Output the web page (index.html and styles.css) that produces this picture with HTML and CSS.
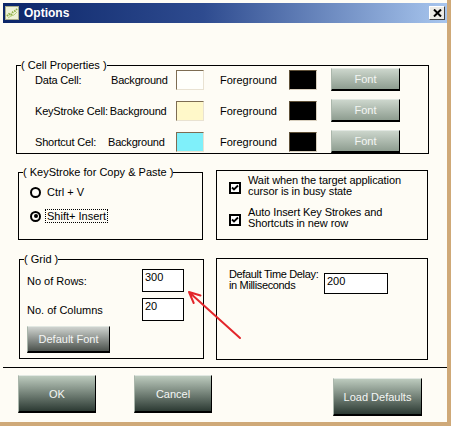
FILE: index.html
```html
<!DOCTYPE html>
<html lang="en">
<head>
<meta charset="UTF-8" />
<title>Options</title>
<link rel="stylesheet" href="styles.css">
</head>
<body>

<div class="window">
  <div class="titlebar">
    <svg class="app-icon" width="14" height="14" viewBox="0 0 14 14">
      <rect x="0.5" y="0.5" width="13" height="13" fill="#eef2d8" stroke="#a9ad8a"/>
      <path d="M2 10 L4 8 L6 9 L8 6 L10 5 L12 3" stroke="#8fb04a" stroke-width="2" fill="none" stroke-dasharray="1.5 1"/>
      <path d="M3 12 L6 10 L9 9 L12 6" stroke="#b7cf7a" stroke-width="1" fill="none"/>
    </svg>
    <span class="title">Options</span>
    <span class="close">
      <svg width="9" height="8" viewBox="0 0 9 8">
        <path d="M1 0.5 L8 7.5 M8 0.5 L1 7.5" stroke="#000" stroke-width="2"/>
      </svg>
    </span>
  </div>

  <div class="content">
    <fieldset class="group cells">
      <legend>( Cell Properties )</legend>
      <div class="cell-rows">
        <div class="cell-row">
          <div class="cell-label"><span class="name w-data">Data Cell:</span><span>Background</span></div>
          <span class="swatch sw-white"></span>
          <span class="fg-label">Foreground</span>
          <span class="swatch sw-black"></span>
          <button class="btn btn-font">Font</button>
        </div>
        <div class="cell-row">
          <div class="cell-label"><span class="name w-key">KeyStroke Cell:</span><span>Background</span></div>
          <span class="swatch sw-yellow"></span>
          <span class="fg-label">Foreground</span>
          <span class="swatch sw-black"></span>
          <button class="btn btn-font">Font</button>
        </div>
        <div class="cell-row">
          <div class="cell-label"><span class="name w-short">Shortcut Cel:</span><span>Background</span></div>
          <span class="swatch sw-cyan"></span>
          <span class="fg-label">Foreground</span>
          <span class="swatch sw-black"></span>
          <button class="btn btn-font">Font</button>
        </div>
      </div>
    </fieldset>

    <div class="pair pair-mid">
      <fieldset class="group keys">
        <legend>( KeyStroke for Copy &amp; Paste )</legend>
        <div class="radio-row"><span class="radio"></span><span>Ctrl + V</span></div>
        <div class="radio-row"><span class="radio on"></span><span class="focus">Shift+ Insert</span></div>
      </fieldset>
      <div class="box checks">
        <div class="check-row">
          <svg class="check" width="12" height="12" viewBox="0 0 12 12">
            <rect x="1" y="1" width="10" height="10" fill="#fff" stroke="#000" stroke-width="2"/>
            <path d="M3 5.5 L5 7.5 L9 3.5" stroke="#000" stroke-width="1.8" fill="none"/>
          </svg>
          <span class="check-text">Wait when the target application<br>cursor is in busy state</span>
        </div>
        <div class="check-row">
          <svg class="check" width="12" height="12" viewBox="0 0 12 12">
            <rect x="1" y="1" width="10" height="10" fill="#fff" stroke="#000" stroke-width="2"/>
            <path d="M3 5.5 L5 7.5 L9 3.5" stroke="#000" stroke-width="1.8" fill="none"/>
          </svg>
          <span class="check-text">Auto Insert Key Strokes and<br>Shortcuts in new row</span>
        </div>
      </div>
    </div>

    <div class="pair pair-low">
      <fieldset class="group grid">
        <legend>( Grid )</legend>
        <div class="field-row"><span class="field-label">No of Rows:</span><span class="input">300</span></div>
        <div class="field-row"><span class="field-label">No. of Columns</span><span class="input">20</span></div>
        <button class="btn btn-default">Default Font</button>
      </fieldset>
      <div class="box delay">
        <span class="delay-text">Default Time Delay:<br>in Milliseconds</span>
        <span class="input input-wide">200</span>
      </div>
    </div>

    <div class="separator"></div>

    <div class="actions">
      <button class="btn btn-big">OK</button>
      <button class="btn btn-big btn-cancel">Cancel</button>
      <button class="btn btn-big btn-load">Load Defaults</button>
    </div>
  </div>

  <svg class="arrow" width="451" height="426" viewBox="0 0 451 426">
    <path d="M240 338 L190 293 M189 292 L200.5 295.5 M189 292 L193.7 303" stroke="#e3262b" stroke-width="2" fill="none" stroke-linecap="round"/>
  </svg>
</div>

</body>
</html>
```

FILE: styles.css
```css
html, body {
  margin: 0; padding: 0;
  font-family: "Liberation Sans", Arial, sans-serif; font-size: 11px;
  color: #000; background: #fff; white-space: nowrap;
}
.window {
  position: relative; width: 451px; height: 426px;
  box-sizing: border-box; padding: 3px 0 0 3px;
  background: #fefcf5;
  border-right: 4px solid #cfa978; border-bottom: 4px solid #cfa978;
}
.titlebar {
  height: 20px; display: flex; align-items: center;
  padding-left: 2px;
  background: linear-gradient(to right, #0c2669, #2e4b8f 45%, #a8c6ee);
}
.app-icon { display: block; }
.title {
  color: #fff; font-weight: bold; font-size: 12px; margin-left: 5px;
}
.close {
  margin-left: auto; margin-right: 2px;
  width: 14px; height: 12px;
  display: flex; align-items: center; justify-content: center;
  background: #ecebe6;
  border: 1px solid; border-color: #fff #404040 #404040 #fff;
}
.close svg { display: block; }

/* group boxes */
.group {
  margin: 0; padding: 0; border: 1px solid #000; box-sizing: border-box;
}
.group legend {
  padding: 0; margin-left: 4px; line-height: 12px; font-size: 11px;
}
.box { border: 1px solid #000; box-sizing: border-box; }

.cells { margin: 36px 0 0 13px; width: 413px; }
.cell-rows {
  display: flex; flex-direction: column; gap: 8px;
  margin-top: -3px; padding-left: 18px;
}
.cell-row { display: flex; align-items: center; height: 23px; }
.cell-label { display: flex; width: 141px; letter-spacing: -0.2px; }
.name { flex-shrink: 0; }
.w-data { width: 76px; }
.w-key { margin-right: 2px; }
.w-short { width: 73px; }
.swatch {
  width: 26px; height: 18px; display: block;
  border: 1px solid; border-color: #7d6c52 #e9e2d2 #e9e2d2 #7d6c52;
}
.sw-white { background: #fffffb; }
.sw-yellow { background: #fff8c9; }
.sw-cyan { background: #7ff0fa; }
.sw-black { background: #000; border-color: #5e5038 #d8cfbe #d8cfbe #5e5038; }
.fg-label { width: 69px; margin-left: 16px; }

.btn {
  font-family: inherit; font-size: 11px; color: #f4f6f4;
  box-sizing: border-box; padding: 0; cursor: pointer;
  border: 1px solid; border-color: #e2e8e2 #000 #000 #aab6ab;
  border-bottom-width: 2px;
}
.btn-font {
  width: 69px; height: 23px; margin-left: 14px;
  background: linear-gradient(#ccd6cc, #8e9d90);
}
.btn-default {
  width: 83px; height: 27px; margin-top: 5px;
  background: linear-gradient(#cfd3cf, #4b514c);
}
.btn-big {
  width: 78px; height: 38px;
  background: linear-gradient(#bdcbbe, #2c3a33);
}

.pair { display: flex; align-items: flex-start; }
.pair-mid { margin-top: 12px; }
.pair-low { margin-top: 13px; }

.keys { margin-left: 15px; width: 185px; height: 74px; }
.radio-row {
  display: flex; align-items: center; height: 16px;
  padding-left: 11px; margin-top: 6px;
}
.radio-row + .radio-row { margin-top: 8px; }
.radio {
  width: 11px; height: 11px; box-sizing: border-box;
  border: 2px solid #000; border-radius: 50%; background: #fffef9;
  margin-right: 6px; position: relative;
}
.radio.on::after {
  content: ""; position: absolute; left: 1.5px; top: 1.5px;
  width: 4px; height: 4px; border-radius: 50%; background: #000;
}
.focus { outline: 1px dotted #000; outline-offset: 0; padding: 0 1px; margin-left: -1px; }

.checks {
  margin: 4px 0 0 13px; width: 212px; height: 70px;
  padding: 4px 0 0 12px;
  display: flex; flex-direction: column; gap: 10px;
}
.check-row { display: flex; align-items: center; height: 22px; }
.check { display: block; margin-top: 4px; flex-shrink: 0; }
.check-text { line-height: 11px; margin-left: 7px; letter-spacing: -0.1px; }

.grid {
  margin-left: 16px; width: 185px; padding: 0 0 5px 7px;
}
.grid legend { margin-left: -3px; }
.field-row { display: flex; align-items: center; height: 23px; margin-top: 4px; }
.field-row + .field-row { margin-top: 6px; }
.field-label { width: 115px; }
.input {
  box-sizing: border-box; width: 42px; height: 23px;
  border: 1px solid #000; background: #fff;
  padding: 1px 2px; line-height: 13px;
}
.delay {
  margin: 5px 0 0 12px; width: 212px; height: 102px;
  padding: 10px 0 0 12px; display: flex; align-items: flex-start;
}
.delay-text { width: 95px; line-height: 11px; letter-spacing: -0.35px; flex-shrink: 0; }
.input-wide { width: 64px; height: 21px; margin-top: 4px; }

.separator { margin-top: 7px; height: 1px; background: #000; }

.actions { display: flex; align-items: flex-start; margin-top: 7px; padding-left: 15px; }
.btn-cancel { margin-left: 38px; }
.btn-load { width: 89px; margin-left: 121px; margin-top: 3px; }

.arrow { position: absolute; left: 0; top: 0; pointer-events: none; }
```
